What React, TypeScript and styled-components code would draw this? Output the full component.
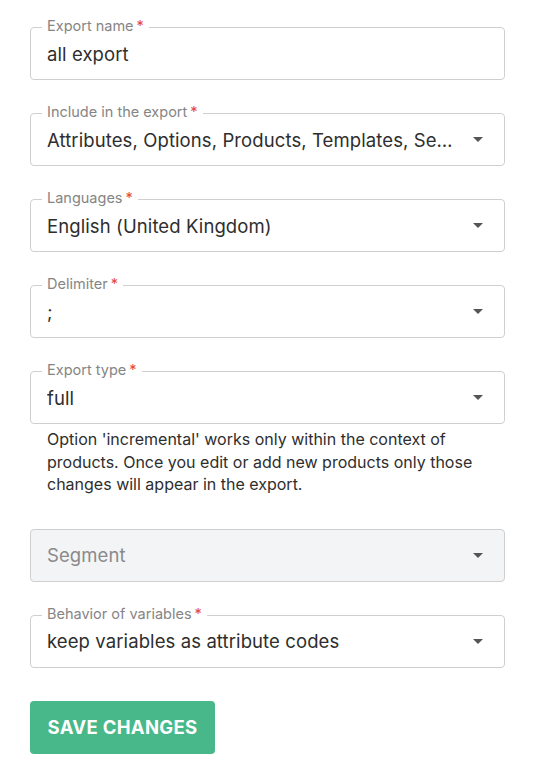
import * as React from 'react';
import styled, { createGlobalStyle } from 'styled-components';

const GlobalStyle = createGlobalStyle`
  body {
    margin: 0;
    background: #fff;
    font-family: Inter, "Noto Sans", sans-serif;
    color: #212121;
  }
`;

const Form = styled.form`
  display: flex;
  flex-direction: column;
  gap: 33px;
  padding: 27px 29px 20px 30px;
`;

const Group = styled.div`
  display: flex;
  flex-direction: column;
`;

const Field = styled.div<{ disabled?: boolean }>`
  position: relative;
  box-sizing: border-box;
  height: 53px;
  display: flex;
  align-items: center;
  padding: 0 16px;
  border: 1px solid #cfcfcf;
  border-radius: 4px;
  background: ${(p) => (p.disabled ? '#f3f4f6' : '#fff')};
`;

const Label = styled.label`
  position: absolute;
  top: -11px;
  left: 11px;
  padding: 0 5px;
  background: #fff;
  font-size: 14.5px;
  line-height: 18px;
  color: #858585;
  white-space: nowrap;
`;

const Star = styled.span`
  color: #e5483f;
  margin-left: 3px;
`;

const Value = styled.span<{ placeholder?: boolean }>`
  flex: 1;
  min-width: 0;
  font-size: 18.5px;
  line-height: 24px;
  letter-spacing: 0.1px;
  color: ${(p) => (p.placeholder ? '#8a8a8a' : '#2e2e2e')};
  white-space: nowrap;
  overflow: hidden;
  text-overflow: ellipsis;
`;

const Arrow = styled.span`
  flex: none;
  margin-left: 16px;
  margin-right: 5px;
  width: 0;
  height: 0;
  border-left: 5px solid transparent;
  border-right: 5px solid transparent;
  border-top: 5px solid #555;
`;

const Helper = styled.p`
  margin: 4px 0 0;
  padding: 0 20px 0 17px;
  font-size: 16px;
  line-height: 22.5px;
  color: #2e2e2e;
`;

const SaveButton = styled.button`
  align-self: flex-start;
  height: 53px;
  width: 185px;
  border: none;
  border-radius: 4px;
  background: #48b88a;
  color: #fff;
  font-family: Inter, "Noto Sans", sans-serif;
  font-weight: 700;
  font-size: 18.5px;
  letter-spacing: 0.3px;
  text-transform: uppercase;
  cursor: pointer;
`;

interface FormFieldProps {
  label?: string;
  value: string;
  select?: boolean;
  disabled?: boolean;
}

const FormField = ({ label, value, select, disabled }: FormFieldProps) => (
  <Field disabled={disabled}>
    {label && (
      <Label>
        {label}
        <Star>*</Star>
      </Label>
    )}
    <Value placeholder={disabled}>{value}</Value>
    {select && <Arrow />}
  </Field>
);

const App = () => (
  <>
    <GlobalStyle />
    <Form onSubmit={(e) => e.preventDefault()}>
      <FormField label="Export name" value="all export" />
      <FormField
        label="Include in the export"
        value="Attributes, Options, Products, Templates, Segments, Variables"
        select
      />
      <FormField label="Languages" value="English (United Kingdom)" select />
      <FormField label="Delimiter" value=";" select />
      <Group>
        <FormField label="Export type" value="full" select />
        <Helper>
          Option 'incremental' works only within the context of products. Once
          you edit or add new products only those changes will appear in the
          export.
        </Helper>
      </Group>
      <FormField value="Segment" select disabled />
      <FormField
        label="Behavior of variables"
        value="keep variables as attribute codes"
        select
      />
      <SaveButton type="submit">Save changes</SaveButton>
    </Form>
  </>
);

export default App;
